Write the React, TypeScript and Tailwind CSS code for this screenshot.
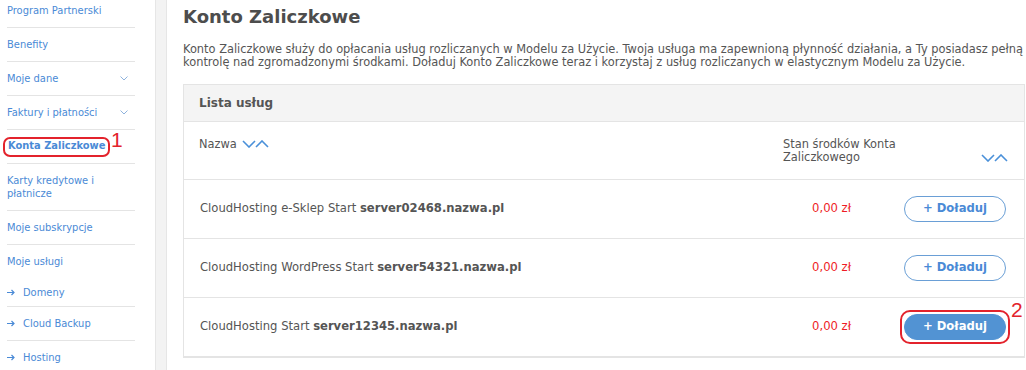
import React from 'react';

const sideFont = { fontFamily: '"DejaVu Sans Condensed", "DejaVu Sans", sans-serif' };

function ChevronDown() {
    return (
        <svg width="8" height="5" viewBox="0 0 8 5" fill="none" stroke="#8fb3dd" strokeWidth="1">
            <path d="M0.5 0.5 L4 4 L7.5 0.5" />
        </svg>
    );
}

function SubArrow() {
    return (
        <svg width="8" height="7" viewBox="0 0 8 7" fill="none" stroke="#4a8ad6" strokeWidth="1.2">
            <path d="M0 3.5 H7 M4.5 1 L7 3.5 L4.5 6" />
        </svg>
    );
}

function SortIcon() {
    return (
        <svg width="27" height="8" viewBox="0 0 27 8" fill="none" stroke="#4a90d9" strokeWidth="1.6">
            <path d="M1 1 L7 7 L13 1" />
            <path d="M14 7 L20 1 L26 7" />
        </svg>
    );
}

interface SideItemProps {
    label: string;
    chevron?: boolean;
    arrow?: boolean;
    h: string;
    divider?: boolean;
}

function SideItem({ label, chevron, arrow, h, divider = true }: SideItemProps) {
    return (
        <div className={`${h} flex items-center justify-between ${divider ? 'border-b border-[#e4e4e4]' : ''}`}>
            <div className="flex items-center text-[11px] leading-[13px] text-[#4a8ad6]">
                {arrow && (
                    <span className="w-[16px] flex items-center">
                        <SubArrow />
                    </span>
                )}
                <span>{label}</span>
            </div>
            {chevron && (
                <span className="mr-[7px]">
                    <ChevronDown />
                </span>
            )}
        </div>
    );
}

const rows = [
    { name: 'CloudHosting e-Sklep Start', server: 'server02468.nazwa.pl' },
    { name: 'CloudHosting WordPress Start', server: 'server54321.nazwa.pl' },
    { name: 'CloudHosting Start', server: 'server12345.nazwa.pl', active: true },
];

export default function App() {
    return (
        <div className="flex h-[370px] w-[1026px] overflow-hidden bg-white" style={{ fontFamily: '"DejaVu Sans", Verdana, sans-serif' }}>
            {/* sidebar */}
            <aside className="w-[155px] shrink-0 pl-[7px] pr-[20px] -mt-[6px]" style={sideFont}>
                <SideItem label="Program Partnerski" h="h-[34px]" />
                <SideItem label="Benefity" h="h-[34px]" />
                <SideItem label="Moje dane" h="h-[34px]" chevron />
                <SideItem label="Faktury i płatności" h="h-[34px]" chevron />
                <div className="relative h-[34px] flex items-center border-b border-[#e4e4e4]">
                    <span className="text-[11px] font-bold text-[#4a8ad6] ml-[1px]">Konta Zaliczkowe</span>
                    <span className="absolute -left-[4px] top-[7px] w-[107px] h-[20px] rounded-[7px] border-2 border-[#e3232c]" />
                    <span className="absolute left-[104px] top-[-2px] text-[21px] leading-[24px] text-[#e3232c]" style={{ fontFamily: '"Liberation Sans", Arial, sans-serif' }}>1</span>
                </div>
                <div className="h-[47px] flex items-center border-b border-[#e4e4e4] text-[11px] leading-[13px] text-[#4a8ad6]">
                    <span>Karty kredytowe i<br />płatnicze</span>
                </div>
                <SideItem label="Moje subskrypcje" h="h-[34px]" />
                <SideItem label="Moje usługi" h="h-[33px]" divider={false} />
                <SideItem label="Domeny" h="h-[29px]" arrow />
                <SideItem label="Cloud Backup" h="h-[34px]" arrow />
                <SideItem label="Hosting" h="h-[34px]" arrow />
            </aside>

            <div className="w-[12px] shrink-0 bg-[#f3f3f3] border-x border-[#e6e6e6]" />

            {/* main */}
            <main className="flex-1 pl-[16px] pr-[1px]">
                <h1 className="pt-[5px] text-[18px] leading-[24px] font-bold text-[#4d4d4d]">Konto Zaliczkowe</h1>
                <p className="mt-[14px] text-[11.4px] leading-[13px] text-[#555] whitespace-nowrap">
                    Konto Zaliczkowe służy do opłacania usług rozliczanych w Modelu za Użycie. Twoja usługa ma zapewnioną płynność działania, a Ty posiadasz pełną
                    <br />
                    kontrolę nad zgromadzonymi środkami. Doładuj Konto Zaliczkowe teraz i korzystaj z usług rozliczanych w elastycznym Modelu za Użycie.
                </p>

                <div className="mt-[15px] border border-b-2 border-[#e4e4e4]">
                    <div className="h-[37px] flex items-center pl-[15px] bg-[#f4f4f4] border-b border-[#e4e4e4] text-[12px] font-bold text-[#555]">
                        Lista usług
                    </div>
                    <div className="h-[57px] flex text-[11.4px] text-[#555]">
                        <div className="flex-1 pl-[15px] pt-[16px] flex items-start gap-[5px]">
                            <span className="leading-[13px]">Nazwa</span>
                            <span className="mt-[2px]">
                                <SortIcon />
                            </span>
                        </div>
                        <div className="w-[241px] pt-[16px] flex items-start">
                            <span className="w-[150px] leading-[13px]">Stan środków Konta<br />Zaliczkowego</span>
                            <span className="mt-[16px] ml-[48px]">
                                <SortIcon />
                            </span>
                        </div>
                    </div>
                    {rows.map((r) => (
                        <div key={r.server} className="h-[59px] flex items-center border-t border-[#e4e4e4] text-[11.6px] text-[#555]">
                            <div className="flex-1 pl-[16px]">
                                {r.name} <span className="font-bold">{r.server}</span>
                            </div>
                            <div className="w-[60px] text-right text-[#ee1c25]">0,00 zł</div>
                            <div className="w-[173px] flex justify-end pr-[18px]">
                                <div className="relative">
                                    <button
                                        className={`w-[102px] h-[26px] rounded-full border text-[11.6px] font-bold ${r.active ? 'bg-[#5293d3] border-[#5293d3] text-white' : 'bg-white border-[#6a9fd6] text-[#4a8ad6]'}`}
                                    >
                                        + Doładuj
                                    </button>
                                    {r.active && (
                                        <>
                                            <span className="absolute -left-[4px] -top-[4px] w-[110px] h-[34px] rounded-[10px] border-2 border-[#e3232c]" />
                                            <span className="absolute left-[107px] -top-[16px] text-[21px] leading-[24px] text-[#e3232c]" style={{ fontFamily: '"Liberation Sans", Arial, sans-serif' }}>2</span>
                                        </>
                                    )}
                                </div>
                            </div>
                        </div>
                    ))}
                </div>
            </main>
        </div>
    );
}
